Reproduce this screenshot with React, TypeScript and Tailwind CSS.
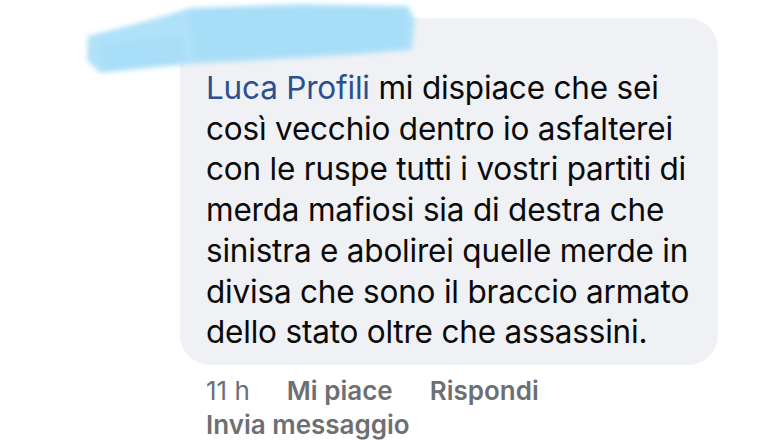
export default function App() {
  const lines = [
    "così vecchio dentro io asfalterei",
    "con le ruspe tutti i vostri partiti di",
    "merda mafiosi sia di destra che",
    "sinistra e abolirei quelle merde in",
    "divisa che sono il braccio armato",
    "dello stato oltre che assassini.",
  ];

  return (
    <div className="relative w-[768px] h-[440px] bg-white overflow-hidden font-['Inter','Liberation_Sans',sans-serif]">
      <div className="pl-[180px] pt-[18px]">
        {/* comment bubble */}
        <div className="w-[538px] rounded-[30px] bg-[#f0f1f4] pl-[26px] pt-[50px] pb-[12px] text-[31.5px] leading-[40.7px] tracking-[-0.2px] text-[#0a0a0a]">
          <div className="whitespace-nowrap">
            <span className="text-[#2b4f8f]">Luca Profili</span> mi dispiace che sei
          </div>
          {lines.map((l) => (
            <div key={l} className="whitespace-nowrap">
              {l}
            </div>
          ))}
        </div>

        {/* actions */}
        <div className="pl-[26px] pt-[9px] text-[26px] leading-[34px] text-[#6e6f72]">
          <div className="flex gap-[37px]">
            <span>11 h</span>
            <span className="font-semibold">Mi piace</span>
            <span className="font-semibold">Rispondi</span>
          </div>
          <div className="font-semibold">Invia messaggio</div>
        </div>
      </div>

      {/* redaction scribble */}
      <svg
        className="absolute left-0 top-0"
        width="440"
        height="100"
        viewBox="0 0 440 100"
      >
        <defs>
          <filter id="blur" x="-20%" y="-50%" width="140%" height="200%">
            <feGaussianBlur stdDeviation="2.5" />
          </filter>
        </defs>
        <g filter="url(#blur)">
          <path
            d="M88 36 C 120 28, 160 18, 190 8 L 300 4 L 408 6 L 415 20 L 412 50 L 350 55 L 250 61 L 190 64 L 150 68 L 100 73 L 87 60 Z"
            fill="#afe1f8"
          />
          <path
            d="M190 10 L 300 8 L 405 10 L 405 46 L 300 54 L 195 58 Z"
            fill="#a6ddf7"
          />
          <path d="M100 45 L 180 36 L 185 62 L 105 68 Z" fill="#a9def8" />
        </g>
      </svg>
    </div>
  );
}
